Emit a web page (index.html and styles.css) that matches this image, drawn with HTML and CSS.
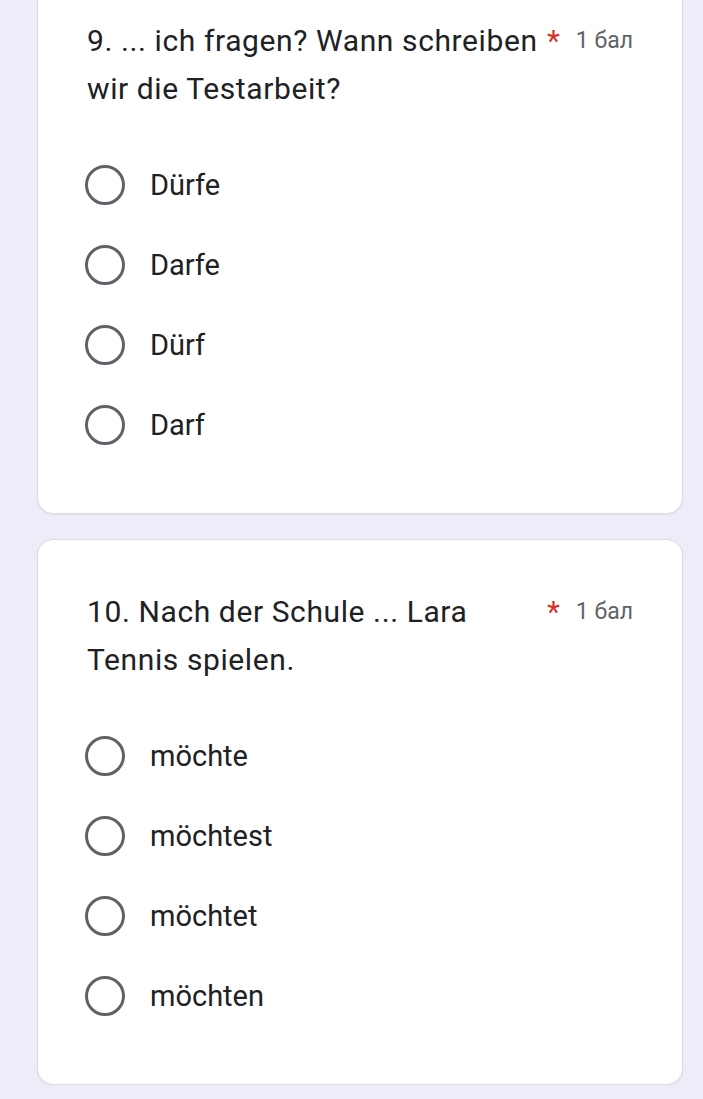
FILE: index.html
```html
<!DOCTYPE html>
<html lang="de">
<head>
<meta charset="utf-8">
<link rel="stylesheet" href="styles.css">
</head>
<body>
<div class="page">
  <div class="card first">
    <div class="head">
      <div class="title">9. ... ich fragen? Wann schreiben wir die Testarbeit?</div>
      <span class="req">*</span>
      <span class="points">1 бал</span>
    </div>
    <div class="options">
      <div class="option"><span class="radio"></span><span class="label">Dürfe</span></div>
      <div class="option"><span class="radio"></span><span class="label">Darfe</span></div>
      <div class="option"><span class="radio"></span><span class="label">Dürf</span></div>
      <div class="option"><span class="radio"></span><span class="label">Darf</span></div>
    </div>
  </div>
  <div class="card">
    <div class="head">
      <div class="title">10. Nach der Schule ... Lara Tennis spielen.</div>
      <span class="req">*</span>
      <span class="points">1 бал</span>
    </div>
    <div class="options">
      <div class="option"><span class="radio"></span><span class="label">möchte</span></div>
      <div class="option"><span class="radio"></span><span class="label">möchtest</span></div>
      <div class="option"><span class="radio"></span><span class="label">möchtet</span></div>
      <div class="option"><span class="radio"></span><span class="label">möchten</span></div>
    </div>
  </div>
</div>
</body>
</html>
```
FILE: styles.css
```css
html, body {
  margin: 0;
  padding: 0;
  background: #efebf8;
  font-family: Roboto, "Noto Sans", sans-serif;
  color: #202124;
}
.page {
  padding: 0 20px 0 37px;
  display: flex;
  flex-direction: column;
  gap: 25px;
}
.card {
  background: #fff;
  border: 1px solid #dadce0;
  border-radius: 16px;
  padding: 48px 49px 48px 49px;
  box-sizing: content-box;
  box-shadow: 0 1px 2px rgba(0,0,0,0.06);
  width: 546px;
}
.card.first {
  margin-top: -32px;
}
.head {
  display: flex;
  align-items: flex-start;
}
.title {
  width: 458px;
  font-size: 30px;
  line-height: 48px;
  letter-spacing: 0.6px;
}
.req {
  color: #d93025;
  font-size: 30px;
  line-height: 48px;
  margin-left: 2px;
}
.points {
  margin-left: auto;
  font-size: 23px;
  line-height: 48px;
  color: #5f6368;
}
.options {
  margin-top: 32px;
  display: flex;
  flex-direction: column;
}
.option {
  height: 80px;
  display: flex;
  align-items: center;
}
.radio {
  width: 34px;
  height: 34px;
  border: 3px solid #5f6368;
  border-radius: 50%;
  box-sizing: content-box;
  margin-left: -2px;
}
.label {
  margin-left: 25px;
  font-size: 29px;
}
```
